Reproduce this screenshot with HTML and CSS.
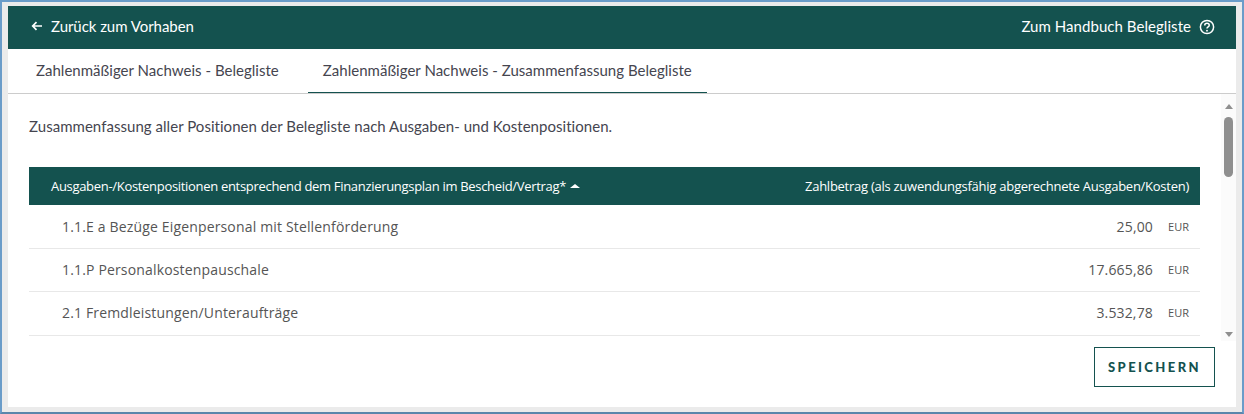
FILE: index.html
```html
<!DOCTYPE html>
<html lang="de">
<head>
  <meta charset="utf-8">
  <title>Belegliste</title>
  <link rel="stylesheet" href="styles.css">
</head>
<body>
  <div class="window">
    <div class="panel">
      <div class="topbar">
        <a class="back">
          <svg class="back-icon" width="12" height="12" viewBox="0 0 12 12">
            <path d="M11 6H2M5.500 2.200 1.700 6l3.800 3.800" fill="none" stroke="#fff" stroke-width="1.700"/>
          </svg>
          Zurück zum Vorhaben
        </a>
        <a class="manual">
          Zum Handbuch Belegliste
          <svg class="help-icon" width="16" height="16" viewBox="0 0 15 15">
            <circle cx="7.500" cy="7.500" r="6.200" fill="none" stroke="#fff" stroke-width="1.400"/>
            <path d="M5.400 6c0-1.300 1-2 2.100-2s2.100.7 2.100 1.900c0 1.500-2.100 1.500-2.100 3.100" fill="none" stroke="#fff" stroke-width="1.400"/>
            <circle cx="7.500" cy="10.900" r=".9" fill="#fff"/>
          </svg>
        </a>
      </div>

      <div class="tabs">
        <div class="tab">Zahlenmäßiger Nachweis - Belegliste</div>
        <div class="tab active">Zahlenmäßiger Nachweis - Zusammenfassung Belegliste</div>
      </div>

      <div class="scroll-wrap">
        <div class="content">
          <p class="intro">Zusammenfassung aller Positionen der Belegliste nach Ausgaben- und Kostenpositionen.</p>
          <div class="table-head">
            <div class="head-left">Ausgaben-/Kostenpositionen entsprechend dem Finanzierungsplan im Bescheid/Vertrag* <span class="sort"></span></div>
            <div class="head-right">Zahlbetrag (als zuwendungsfähig abgerechnete Ausgaben/Kosten)</div>
          </div>
          <div class="row">
            <div class="label">1.1.E a Bezüge Eigenpersonal mit Stellenförderung</div>
            <div class="amount">25,00</div>
            <div class="unit">EUR</div>
          </div>
          <div class="row">
            <div class="label">1.1.P Personalkostenpauschale</div>
            <div class="amount">17.665,86</div>
            <div class="unit">EUR</div>
          </div>
          <div class="row">
            <div class="label">2.1 Fremdleistungen/Unteraufträge</div>
            <div class="amount">3.532,78</div>
            <div class="unit">EUR</div>
          </div>
        </div>
        <div class="scrollbar">
          <span class="arrow-up"></span>
          <span class="thumb"></span>
          <span class="arrow-down"></span>
        </div>
      </div>

      <div class="footer">
        <button class="save-btn">SPEICHERN</button>
      </div>
    </div>
  </div>
</body>
</html>
```

FILE: styles.css
```css
* {
  box-sizing: border-box;
}

body {
  margin: 0;
  font-family: "Open Sans", sans-serif;
  background-color: #ebebeb;
}

.window {
  width: 1244px;
  height: 414px;
  border: 2px solid #6a9cc9;
  border-bottom-color: #5a86ab;
  padding: 4px 6px 5px 6px;
  overflow: hidden;
}

.panel {
  background-color: white;
  height: 401px;
}

.topbar {
  display: flex;
  justify-content: space-between;
  align-items: center;
  height: 43px;
  padding: 0 21px 3px 23px;
  background-color: #14524f;
  color: white;
  font-family: Lato, sans-serif;
  font-size: 15px;
}

.back,
.manual {
  display: flex;
  align-items: center;
}

.back {
  letter-spacing: -0.05px;
}

.manual {
  letter-spacing: 0.05px;
}

.back-icon {
  margin-right: 8px;
}

.help-icon {
  margin: 2px 0 0 8px;
}

.tabs {
  display: flex;
  height: 45px;
  padding-left: 13px;
  border-bottom: 1px solid #cccccc;
  font-family: Lato, sans-serif;
  font-size: 15px;
  letter-spacing: 0.02px;
  color: #45454f;
}

.tab {
  padding: 12px 15px 0 15px;
  margin-right: 14px;
  height: 44px;
}

.tab.active {
  border-bottom: 1px solid #14524f;
}

.scroll-wrap {
  display: flex;
  height: 247px;
  overflow: hidden;
}

.content {
  flex: 1;
  padding: 0 21px;
}

.intro {
  margin: 22px 0 0 0;
  height: 51px;
  font-family: Lato, sans-serif;
  font-size: 15px;
  letter-spacing: 0.04px;
  line-height: 20px;
  color: #45454f;
}

.table-head {
  display: flex;
  justify-content: space-between;
  align-items: center;
  height: 38px;
  padding: 0 11px 0 22px;
  background-color: #14524f;
  color: white;
  font-size: 13px;
}

.head-left {
  letter-spacing: -0.31px;
}

.head-right {
  letter-spacing: -0.26px;
}

.sort {
  display: inline-block;
  width: 0;
  height: 0;
  margin: 0 0 3px 1px;
  border-left: 5px solid transparent;
  border-right: 5px solid transparent;
  border-bottom: 4px solid white;
}

.row {
  display: flex;
  align-items: center;
  height: 43.500px;
  padding: 0 11px 0 33px;
  border-bottom: 1px solid #e8e8e8;
  color: #555555;
  font-size: 14px;
  letter-spacing: 0.16px;
}

.row:last-child {
  padding-bottom: 1px;
}

.label {
  flex: 1;
}

.unit {
  width: 36px;
  text-align: right;
  font-size: 11px;
  letter-spacing: 0;
}

.scrollbar {
  display: flex;
  flex-direction: column;
  align-items: center;
  width: 15px;
  background-color: #fbfbfb;
  padding-top: 10px;
  position: relative;
}

.arrow-up {
  width: 0;
  height: 0;
  border-left: 4.500px solid transparent;
  border-right: 4.500px solid transparent;
  border-bottom: 5px solid #8f8f8f;
}

.thumb {
  width: 9px;
  height: 60px;
  margin-top: 8px;
  border-radius: 5px;
  background-color: #8f8f8f;
}

.arrow-down {
  position: absolute;
  bottom: 4px;
  width: 0;
  height: 0;
  border-left: 4.500px solid transparent;
  border-right: 4.500px solid transparent;
  border-top: 5px solid #8f8f8f;
}

.footer {
  display: flex;
  justify-content: flex-end;
  padding: 6px 21px 0 0;
}

.save-btn {
  width: 121px;
  height: 40px;
  background-color: white;
  border: 1px solid #14524f;
  border-radius: 0;
  color: #14524f;
  font-family: Lato, sans-serif;
  font-size: 13px;
  font-weight: 900;
  letter-spacing: 2.400px;
}
```
